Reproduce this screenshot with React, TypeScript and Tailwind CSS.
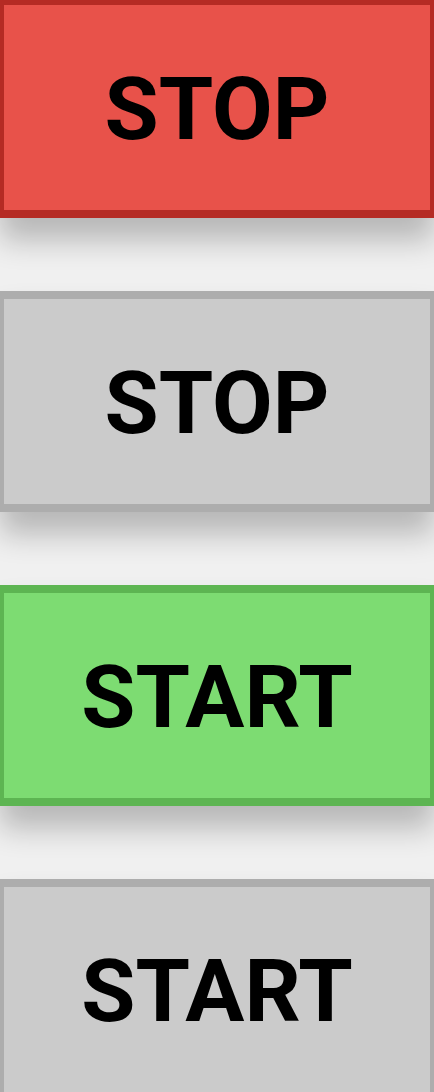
import React from "react";

const variants = {
  red: "bg-[#e8524a] border-[#b52b24]",
  gray: "bg-[#cbcbcb] border-[#adadad]",
  green: "bg-[#7ddc72] border-[#5db552]",
};

function Btn({ label, v }: { label: string; v: keyof typeof variants }) {
  return (
    <button
      className={`w-full h-[221px] border-x-4 border-y-8 ${variants[v]} flex items-center justify-center pt-[3px] shadow-[0_22px_28px_rgba(0,0,0,0.24)] font-['Roboto',sans-serif] font-bold text-[88px] text-black leading-none`}
    >
      {label}
    </button>
  );
}

export default function App() {
  return (
    <div className="min-h-[1092px] w-[434px] bg-[#f0f0f0] overflow-hidden">
      <div className="flex flex-col gap-[73px] -mt-[3px]">
        <Btn label="STOP" v="red" />
        <Btn label="STOP" v="gray" />
        <Btn label="START" v="green" />
        <Btn label="START" v="gray" />
      </div>
    </div>
  );
}
